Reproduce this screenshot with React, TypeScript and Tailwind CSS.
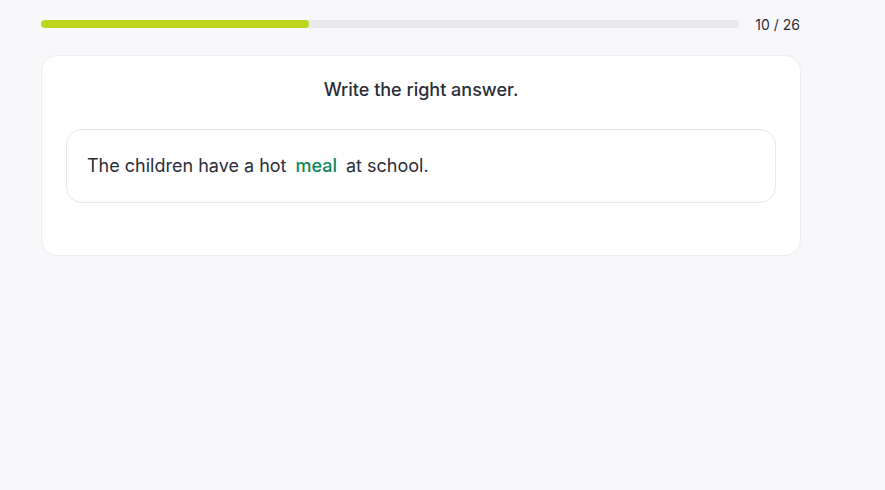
export default function App() {
  const done = 10
  const total = 26

  return (
    <div className="min-h-screen w-full bg-[#f8f8fa] font-['Inter',sans-serif] text-[#2b2d3a]">
      <div className="w-[760px] ml-[41px] pt-[13px]">
        <div className="flex items-center h-[22px]">
          <div className="w-[698px] h-[8px] rounded-full bg-[#e9e9ec] overflow-hidden">
            <div className="h-full rounded-full bg-[#bfd41a]" style={{ width: `${(done / total) * 100}%` }} />
          </div>
          <span className="ml-auto mr-[1px] text-[14px] text-[#2b2d3a]">
            {done} / {total}
          </span>
        </div>

        <div className="mt-[20px] h-[201px] rounded-[16px] border border-[#ededf0] bg-white px-[24px] pt-[22px]">
          <h2 className="text-center text-[18px] font-medium leading-[24px]">Write the right answer.</h2>
          <div className="mt-[27px] h-[74px] rounded-[16px] border border-[#e7e7ea] flex items-center px-[20px] pb-[1px] text-[18px]">
            <span>The children have a hot</span>
            <span className="px-[9px] font-medium text-[#10845a]">meal</span>
            <span>at school.</span>
          </div>
        </div>
      </div>
    </div>
  )
}
